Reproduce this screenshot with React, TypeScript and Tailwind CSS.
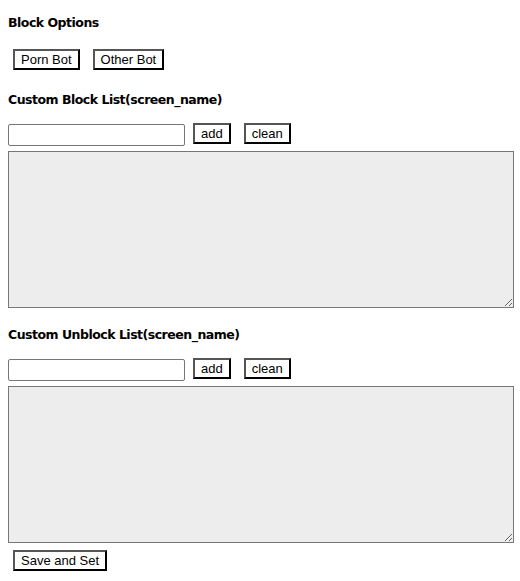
import React from "react";

const headingCls =
  "font-['DejaVu_Sans',sans-serif] font-bold text-[12.5px] leading-[15px] tracking-[-0.5px] text-black";

function Btn({ children, className = "" }: { children: React.ReactNode; className?: string }) {
  return (
    <button
      className={
        "h-[21px] px-[6px] bg-white text-black border-2 border-black border-t-[#555] border-l-[#555] font-['Liberation_Sans',Arial,sans-serif] text-[13px] leading-[15px] " +
        className
      }
    >
      {children}
    </button>
  );
}

function ListBlock({ title }: { title: string }) {
  return (
    <div className="flex flex-col">
      <div className={headingCls}>{title}</div>
      <div className="flex items-start mt-[17px]">
        <input
          type="text"
          className="w-[177px] h-[22px] bg-white border border-[#767676] rounded-[2px] px-[2px] text-[13.33px] font-['Liberation_Sans',Arial,sans-serif]"
        />
        <Btn className="ml-[8px] -mt-[1px]">add</Btn>
        <Btn className="ml-[13px] -mt-[1px]">clean</Btn>
      </div>
      <textarea className="mt-[5px] w-[506px] h-[157px] bg-[#ededed] border border-[#777] block" />
    </div>
  );
}

export default function App() {
  return (
    <div className="w-[520px] h-[581px] bg-white p-2 flex flex-col">
      <div className={headingCls + " mt-[7px]"}>Block Options</div>
      <div className="flex mt-[19px] pl-[5px]">
        <Btn>Porn Bot</Btn>
        <Btn className="ml-[13px]">Other Bot</Btn>
      </div>
      <div className="mt-[22px]">
        <ListBlock title="Custom Block List(screen_name)" />
      </div>
      <div className="mt-[19px]">
        <ListBlock title="Custom Unblock List(screen_name)" />
      </div>
      <div className="flex mt-[7px] pl-[5px]">
        <Btn>Save and Set</Btn>
      </div>
    </div>
  );
}
